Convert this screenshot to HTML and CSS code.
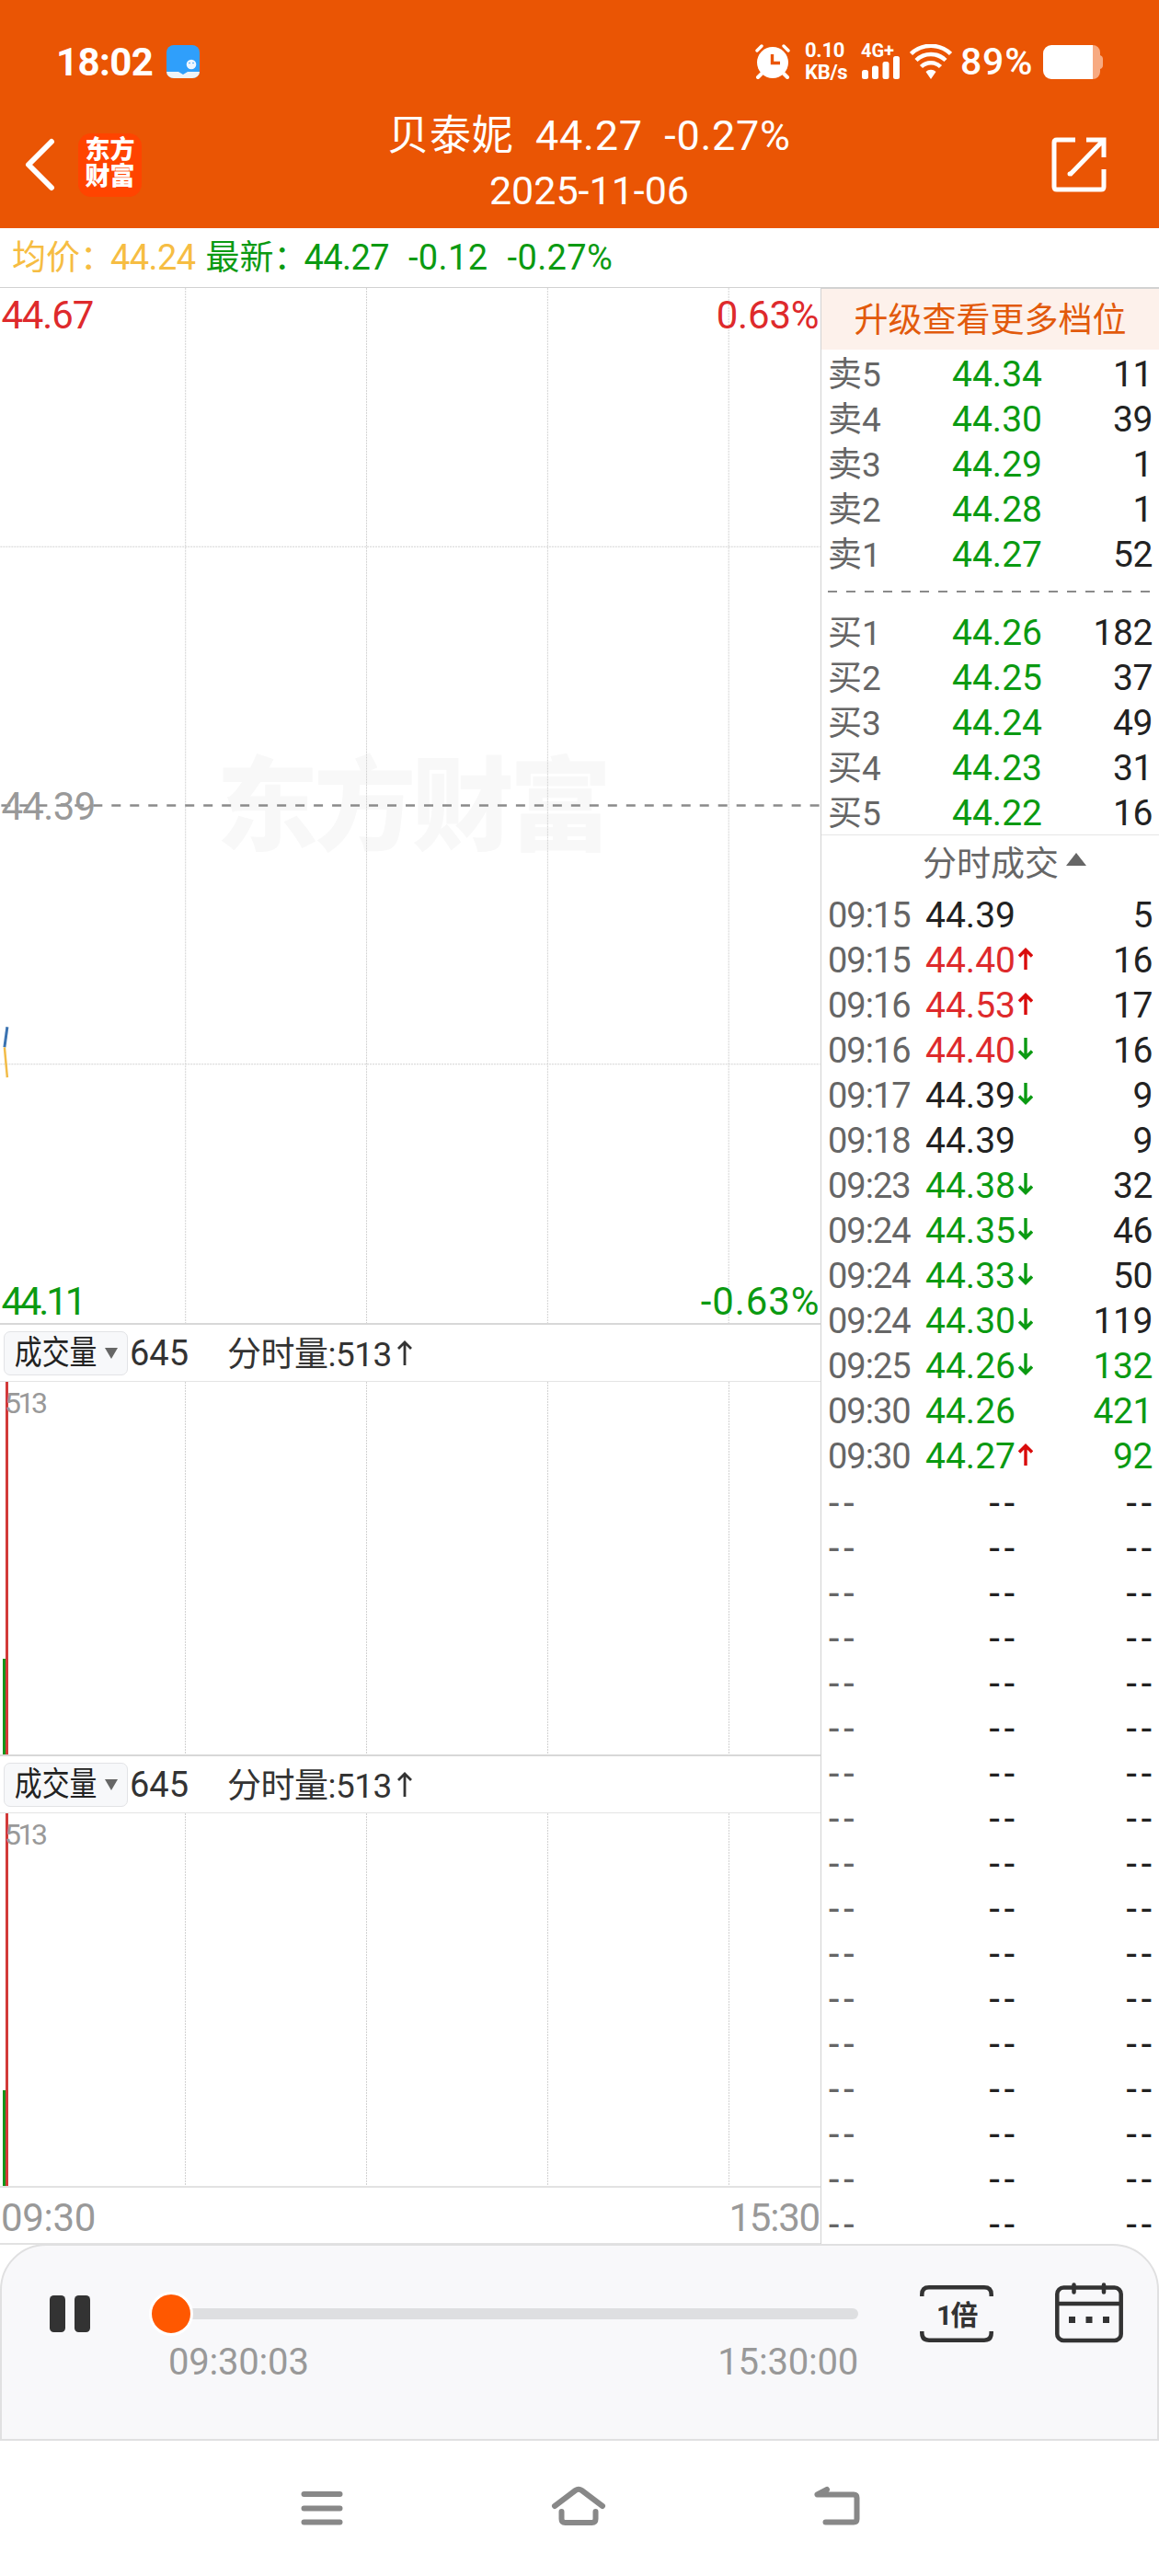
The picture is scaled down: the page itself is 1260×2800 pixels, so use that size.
FILE: index.html
```html
<!DOCTYPE html>
<html lang="zh-CN">
<head>
    <meta charset="UTF-8">
    <meta name="viewport" content="width=device-width, initial-scale=1.0">
    <title>贝泰妮 分时回放</title>
    <link rel="stylesheet" href="styles.css">
</head>
<body>
    <div class="header">
        <div class="status-bar">
            <span class="clock">18:02</span>
            <svg class="app-icon" width="36" height="36" viewBox="0 0 36 36">
                <rect width="36" height="36" rx="8" fill="#2f9ffb"/>
                <path d="M0 29h13l5 3 5-3h13a8 7 0 0 1-8 7H8a8 7 0 0 1-8-7z" fill="#eef3f8"/>
                <circle cx="27" cy="21" r="5.3" fill="#eef6ff"/>
                <circle cx="25" cy="19.5" r=".8" fill="#2f9ffb"/>
                <circle cx="29" cy="19.5" r=".8" fill="#2f9ffb"/>
            </svg>
            <svg class="alarm" width="38" height="38" viewBox="0 0 38 38" fill="none" stroke="#fff" stroke-linecap="round">
                <circle cx="19" cy="20" r="17" fill="#fff" stroke="none"/>
                <path d="M2 7l5-5M36 7l-5-5" stroke-width="3.4"/>
                <path d="M7 32l-4 4M31 32l4 4" stroke-width="4"/>
                <path d="M18.500 11v9.500h8.500" stroke="#ea5504" stroke-width="3.400" stroke-linecap="butt"/>
            </svg>
            <div class="net-speed"><span>0.10</span><span>KB/s</span></div>
            <div class="signal">
                <span>4G+</span>
                <svg width="42" height="25" viewBox="0 0 42 25" fill="#fff">
                    <rect x="1" y="15" width="7" height="10" rx="2.500"/>
                    <rect x="12" y="10.500" width="7" height="14.500" rx="2.500"/>
                    <rect x="23.500" y="6" width="7" height="19" rx="2.500"/>
                    <rect x="35" y="0" width="7" height="25" rx="2.500"/>
                </svg>
            </div>
            <svg class="wifi" width="46" height="38" viewBox="0 0 46 38" fill="none" stroke="#fff" stroke-width="4.500">
                <path d="M1.500 10.500a31 31 0 0 1 43 0"/>
                <path d="M7 17.500a23 23 0 0 1 32 0"/>
                <path d="M12.500 24.500a15 15 0 0 1 21 0"/>
                <path d="M17.500 30a8 8 0 0 1 11 0l-5.500 8z" fill="#fff" stroke="none"/>
            </svg>
            <span class="battery-text">89%</span>
            <svg class="battery" width="65" height="37" viewBox="0 0 65 37">
                <path d="M54 0a8 8 0 0 1 8 8v3q3 1 3 4v7q0 3-3 4v3a8 8 0 0 1-8 8z" fill="#f7aa81"/>
                <path d="M9 0h45v37H9a9 9 0 0 1-9-9V9a9 9 0 0 1 9-9z" fill="#fff"/>
            </svg>
        </div>
        <div class="title-bar">
            <div class="title-left">
                <svg width="36" height="58" viewBox="0 0 36 58" fill="none" stroke="#fff" stroke-width="6" stroke-linecap="round" stroke-linejoin="round">
                    <path d="M31 4L6 29l25 25"/>
                </svg>
                <div class="logo">东方<br>财富</div>
            </div>
            <div class="title-text">
                <div class="stock-name">贝泰妮&nbsp; 44.27&nbsp; -0.27%</div>
                <div class="stock-date">2025-11-06</div>
            </div>
            <svg class="share" width="60" height="60" viewBox="0 0 60 60" fill="none" stroke="#fff" stroke-width="5">
                <path d="M26 3H6q-3 0-3 3v48q0 3 3 3h48q3 0 3-3V35"/>
                <path d="M38 3h19v19M57 3L20 41"/>
                <circle cx="20" cy="40" r="2.500" fill="#fff" stroke="none"/>
            </svg>
        </div>
    </div>

    <div class="quote">
        <span class="avg">均价：</span><span class="avg quote-num">44.24</span>
        <span class="green last">最新：</span><span class="green quote-num">44.27</span>
        <span class="green change">-0.12</span>
        <span class="green change">-0.27%</span>
    </div>

    <div class="main">
        <div class="charts">
            <!-- 分时图 -->
            <svg class="price-chart" width="892" height="1126" viewBox="0 0 892 1126">
                <text x="235" y="604" class="watermark" textLength="430">东方财富</text>
                <g class="grid">
                    <path d="M201.500 0V1126M398.500 0V1126M595.500 0V1126M792.500 0V1126M0 281.500H892M0 844.500H892"/>
                </g>
                <path class="base-line" d="M1 563H892"/>
                <path d="M7.500 804L4.500 826" stroke="#3b73b1" stroke-width="3"/>
                <path d="M4.500 826L7.500 859" stroke="#f2bc48" stroke-width="2.500"/>
                <text x="1" y="44.500" class="label red" textLength="101">44.67</text>
                <text x="779" y="44.500" class="label red" textLength="112">0.63%</text>
                <text x="1" y="579" class="label gray" textLength="103">44.39</text>
                <text x="1" y="1117" class="label green" textLength="93">44.11</text>
                <text x="762" y="1117" class="label green" textLength="129">-0.63%</text>
            </svg>

            <div class="vol-head">
                <div class="picker"><span>成交量</span><i></i></div>
                <span class="vol-total">645</span>
                <span class="vol-now">分时量:513</span>
                <svg width="16" height="28" viewBox="0 0 16 28" fill="none" stroke="#333" stroke-width="2.800"><path d="M8 27V2M1 9l7-7 7 7"/></svg>
            </div>
            <svg class="vol-chart" width="892" height="405" viewBox="0 0 892 405">
                <g class="grid"><path d="M201.500 0V405M398.500 0V405M595.500 0V405M792.500 0V405"/></g>
                <rect x="3" y="301" width="3" height="104" fill="#14951a"/>
                <rect x="6" y="0" width="3" height="405" fill="#d23a39"/>
                <text x="5" y="34" class="label small gray" textLength="47">513</text>
            </svg>

            <div class="vol-head">
                <div class="picker"><span>成交量</span><i></i></div>
                <span class="vol-total">645</span>
                <span class="vol-now">分时量:513</span>
                <svg width="16" height="28" viewBox="0 0 16 28" fill="none" stroke="#333" stroke-width="2.800"><path d="M8 27V2M1 9l7-7 7 7"/></svg>
            </div>
            <svg class="vol-chart" width="892" height="405" viewBox="0 0 892 405">
                <g class="grid"><path d="M201.500 0V405M398.500 0V405M595.500 0V405M792.500 0V405"/></g>
                <rect x="3" y="301" width="3" height="104" fill="#14951a"/>
                <rect x="6" y="0" width="3" height="405" fill="#d23a39"/>
                <text x="5" y="34" class="label small gray" textLength="47">513</text>
            </svg>
            <div class="time-axis"><span>09:30</span><span class="axis-end">15:30</span></div>
        </div>

        <div class="side">
            <div class="upgrade">升级查看更多档位</div>
            <div class="book" id="sellList"></div>
            <svg class="book-line" width="367" height="38" viewBox="0 0 367 38"><path d="M7 15H360" stroke="#8a8a8a" stroke-width="2" stroke-dasharray="10 10"/></svg>
            <div class="book" id="buyList"></div>
            <div class="deal-head">分时成交<i></i></div>
            <div id="dealList"></div>
        </div>
    </div>

    <div class="player">
        <svg class="pause" width="44" height="40" viewBox="0 0 44 40" fill="#333">
            <rect width="17" height="40" rx="4.500"/>
            <rect x="27" width="17" height="40" rx="4.500"/>
        </svg>
        <div class="progress">
            <div class="track"><div class="knob"></div></div>
            <div class="progress-time"><span>09:30:03</span><span>15:30:00</span></div>
        </div>
        <div class="speed">
            <svg width="80" height="62" viewBox="0 0 80 62" fill="none" stroke="#333" stroke-width="4.500">
                <path d="M2.300 12V10q0-7.700 7.700-7.700h60q7.700 0 7.700 7.700v2M2.300 50v2q0 7.700 7.700 7.700h60q7.700 0 7.700-7.700v-2"/>
            </svg>
            <span>1倍</span>
        </div>
        <svg class="calendar" width="74" height="66" viewBox="0 0 74 66" fill="none" stroke="#333" stroke-width="4.500">
            <rect x="2.300" y="5.500" width="69.400" height="57.500" rx="7"/>
            <path d="M2 23h70"/>
            <path d="M20.500 2.500v8M53 2.500v8" stroke-linecap="round"/>
            <path d="M15 40.500h7M33.500 40.500h7M52 40.500h7" stroke-width="7"/>
        </svg>
    </div>

    <div class="nav">
        <svg width="46" height="46" viewBox="0 0 46 46" stroke="#888" stroke-width="6" stroke-linecap="round"><path d="M3.500 9h39M3.500 24.500h39M3.500 39.500h39"/></svg>
        <svg width="60" height="46" viewBox="0 0 60 46" fill="none" stroke="#888" stroke-width="6" stroke-linecap="round" stroke-linejoin="round"><path d="M4 22L26.500 5q3.500-2.500 7 0L56 22M11.500 28v8q0 4 4 4h29q4 0 4-4v-8"/></svg>
        <svg width="50" height="46" viewBox="0 0 50 46" fill="none" stroke="#888" stroke-width="6" stroke-linecap="round" stroke-linejoin="round"><path d="M14 4L3.500 9.500H43q3.500 0 3.500 3.500v23q0 3.500-3.500 3.500H12.500"/></svg>
    </div>

    <script>
        const sells = [['卖5', '44.34', 11], ['卖4', '44.30', 39], ['卖3', '44.29', 1], ['卖2', '44.28', 1], ['卖1', '44.27', 52]];
        const buys = [['买1', '44.26', 182], ['买2', '44.25', 37], ['买3', '44.24', 49], ['买4', '44.23', 31], ['买5', '44.22', 16]];

        // 时间, 价格, 价格颜色, 箭头, 手数, 手数颜色
        const deals = [
            ['09:15', '44.39', '', '', 5, ''],
            ['09:15', '44.40', 'red', 'up', 16, ''],
            ['09:16', '44.53', 'red', 'up', 17, ''],
            ['09:16', '44.40', 'red', 'down', 16, ''],
            ['09:17', '44.39', '', 'down', 9, ''],
            ['09:18', '44.39', '', '', 9, ''],
            ['09:23', '44.38', 'green', 'down', 32, ''],
            ['09:24', '44.35', 'green', 'down', 46, ''],
            ['09:24', '44.33', 'green', 'down', 50, ''],
            ['09:24', '44.30', 'green', 'down', 119, ''],
            ['09:25', '44.26', 'green', 'down', 132, 'green'],
            ['09:30', '44.26', 'green', '', 421, 'green'],
            ['09:30', '44.27', 'green', 'up', 92, 'green']
        ];

        const arrows = {
            up: '<svg width="16" height="24" viewBox="0 0 16 24" fill="none" stroke="#d90b0b" stroke-width="3.400"><path d="M8 24V3M1 9.500l7-7 7 7"/></svg>',
            down: '<svg width="16" height="24" viewBox="0 0 16 24" fill="none" stroke="#0b9a12" stroke-width="3.400"><path d="M8 0v21M1 14.500l7 7 7-7"/></svg>',
            '': ''
        };

        function renderBook(id, rows) {
            document.getElementById(id).innerHTML = rows.map(r =>
                `<div class="row"><span class="name">${r[0]}</span><span class="price green">${r[1]}</span><span class="num">${r[2]}</span></div>`
            ).join('');
        }

        renderBook('sellList', sells);
        renderBook('buyList', buys);

        // 不足30行用 -- 补齐
        while (deals.length < 30) {
            deals.push(['--', '--', 'none', '', '--', 'none']);
        }
        document.getElementById('dealList').innerHTML = deals.map(d =>
            `<div class="row deal"><span class="time ${d[5]}">${d[0]}</span><span class="price ${d[2]}">${d[1]}</span><span class="arrow">${arrows[d[3]]}</span><span class="num ${d[5]}">${d[4]}</span></div>`
        ).join('');
    </script>
</body>
</html>
```
FILE: styles.css
```css
* {
    box-sizing: border-box;
}
body {
    font-family: Roboto, "Noto Sans CJK SC", sans-serif;
    background-color: #fff;
    color: #222;
    margin: 0;
    width: 1260px;
    height: 2800px;
    display: flex;
    flex-direction: column;
}
svg {
    display: block;
    flex: none;
}
.header {
    height: 248px;
    background-color: #ea5504;
    color: #fff;
    flex: none;
}
.status-bar {
    height: 112px;
    padding: 22px 61px 0 61px;
    display: flex;
    align-items: center;
}
.clock {
    font-size: 42px;
    font-weight: 700;
    width: 120px;
    letter-spacing: -0.6px;
}
.alarm {
    margin-left: auto;
    margin-right: 16px;
}
.net-speed {
    width: 61px;
    display: flex;
    flex-direction: column;
    font-size: 22px;
    line-height: 24px;
    font-weight: 700;
    letter-spacing: -0.3px;
}
.signal {
    width: 53px;
    height: 38px;
    font-size: 20px;
    font-weight: 700;
    line-height: 14px;
}
.signal span {
    display: block;
    height: 13px;
}
.battery-text {
    font-size: 41px;
    font-weight: 500;
    width: 99px;
    padding-left: 9px;
    letter-spacing: 0.8px;
}
.title-bar {
    height: 134px;
    padding: 0 57px 0 25px;
    display: flex;
    align-items: center;
}
.title-left {
    width: 177px;
    display: flex;
    align-items: center;
    gap: 24px;
}
.logo {
    width: 69px;
    height: 69px;
    border-radius: 14px;
    background-color: #ff4400;
    font-size: 27px;
    font-weight: 900;
    line-height: 29px;
    text-align: center;
    padding-top: 4px;
}
.title-text {
    flex: 1;
    text-align: center;
    white-space: nowrap;
    margin-top: -6px;
}
.stock-name {
    font-size: 45px;
    line-height: 61px;
    letter-spacing: 0.7px;
}
.stock-date {
    font-size: 43px;
    line-height: 58px;
}
.share {
    margin-left: 64px;
}
.quote {
    height: 64px;
    padding: 0 13px;
    font-size: 37px;
    line-height: 65px;
    display: flex;
    flex: none;
    white-space: nowrap;
}
.quote-num {
    font-size: 38px;
    letter-spacing: -0.6px;
}
.avg {
    color: #f6bd43;
}
.quote .quote-num {
    margin-left: -4px;
}
.last {
    margin-left: 11px;
}
.change {
    font-size: 38px;
    margin-left: 21px;
    letter-spacing: 0.4px;
}
.green {
    color: #0b9a12;
    fill: #0b9a12;
}
.red {
    color: #de2a2c;
    fill: #de2a2c;
}
.gray {
    color: #999;
    fill: #999;
}
.main {
    display: flex;
    height: 2127px;
    flex: none;
}
.charts {
    width: 892px;
    flex: none;
}
.price-chart {
    border-top: 1px solid #d2d2d2;
}
.label {
    font-size: 42px;
}
.small {
    font-size: 32px;
}
.watermark {
    font-family: "Noto Sans CJK SC", sans-serif;
    font-size: 111px;
    font-weight: 900;
    fill: #f8f8f8;
}
.grid path {
    fill: none;
    stroke: #d2d2d2;
    stroke-width: 1;
    stroke-dasharray: 2 1;
}
.base-line {
    stroke: #8a8a8a;
    stroke-width: 2.5;
    stroke-dasharray: 10 10;
}
.vol-head {
    height: 64px;
    border-top: 2px solid #d8d8d8;
    border-bottom: 1px solid #e4e4e4;
    padding-left: 4px;
    display: flex;
    align-items: center;
    color: #333;
}
.picker {
    width: 135px;
    height: 48px;
    border: 1px solid #e2e3e6;
    border-radius: 7px;
    background-color: #f7f8fa;
    display: flex;
    align-items: center;
    color: #222;
}
.picker span {
    font-size: 36px;
    line-height: 44px;
    width: 98px;
    padding-left: 13px;
    white-space: nowrap;
    transform: scaleX(0.83);
    transform-origin: left;
}
.picker i {
    margin-left: 11px;
    border: 7.5px solid transparent;
    border-top: 12px solid #666;
    border-bottom: 0;
}
.vol-total {
    font-size: 38px;
    width: 108px;
    padding-left: 2px;
}
.vol-now {
    font-size: 37px;
    width: 185px;
    margin-top: -3px;
    letter-spacing: -0.5px;
    white-space: nowrap;
}
.time-axis {
    height: 64px;
    border-top: 2px solid #e2e2e2;
    border-bottom: 2px solid #e2e2e2;
    display: flex;
    justify-content: space-between;
    padding: 0 1px 0 1px;
    font-size: 42px;
    line-height: 65px;
    letter-spacing: -0.3px;
    color: #999;
}
.axis-end {
    letter-spacing: -1.2px;
}
.side {
    width: 368px;
    border-left: 1px solid #d2d2d2;
}
.upgrade {
    height: 68px;
    border-top: 2px solid #d2d2d2;
    background-color: #fdf1eb;
    color: #e25a0c;
    font-size: 37px;
    line-height: 69px;
    text-align: center;
    white-space: nowrap;
}
.book {
    padding-top: 3px;
}
.row {
    height: 49px;
    padding: 0 7px 0 7px;
    display: flex;
    align-items: center;
    font-size: 39px;
    line-height: 49px;
}
.name {
    width: 100px;
    font-size: 37px;
    color: #666;
}
.row .price {
    width: 133px;
    text-align: right;
    letter-spacing: 0;
}
.num {
    flex: 1;
    text-align: right;
    letter-spacing: -0.4px;
}
.book-line {
    margin-bottom: -5px;
}
.deal-head {
    height: 64px;
    margin-top: -2px;
    border-top: 1px solid #e6e6e6;
    font-size: 37px;
    line-height: 64px;
    color: #666;
    display: flex;
    padding-left: 110px;
}
.deal-head i {
    width: 22px;
    height: 14px;
    margin-left: 8px;
    margin-top: 19px;
    background-color: #666;
    clip-path: polygon(50% 0, 100% 100%, 0 100%);
}
.time {
    width: 93px;
    font-size: 38px;
    color: #666;
    letter-spacing: -1px;
}
.time.green {
    color: #666;
}
.deal .price {
    width: 111px;
}
.deal .none {
    font-family: "Noto Sans", sans-serif;
    font-size: 41px;
    line-height: 46px;
    letter-spacing: 3px;
    margin-top: -3px;
}
.deal .price.none,
.deal .num.none {
    position: relative;
    left: 3px;
}
.arrow {
    width: 20px;
    padding-left: 3px;
    margin-top: -5px;
}
.player {
    height: 214px;
    flex: none;
    border: 2px solid #e0e0e1;
    border-radius: 50px 50px 0 0;
    background-color: #f8f8fa;
    display: flex;
    align-items: flex-start;
    padding: 0 36px 0 52px;
}
.pause {
    margin-top: 54px;
}
.progress {
    width: 747px;
    margin: 68px 0 0 88px;
}
.track {
    height: 12px;
    border-radius: 6px;
    background-color: #dedfe1;
    position: relative;
}
.knob {
    position: absolute;
    left: -24px;
    top: -18px;
    width: 48px;
    height: 48px;
    border-radius: 50%;
    border: 3px solid #fff;
    background-color: #ff5800;
}
.progress-time {
    display: flex;
    justify-content: space-between;
    margin: 21px 0 0 -3px;
    font-size: 40px;
    line-height: 52px;
    letter-spacing: -0.2px;
    color: #999;
}
.speed {
    position: relative;
    margin: 43px 0 0 67px;
}
.speed span {
    position: absolute;
    left: 0;
    top: 2px;
    width: 80px;
    line-height: 62px;
    text-align: center;
    font-size: 30px;
    font-weight: 700;
    letter-spacing: -1.5px;
    color: #333;
}
.calendar {
    margin: 40px 0 0 67px;
}
.nav {
    flex: 1;
    padding: 49px 325px 0 327px;
    display: flex;
    justify-content: space-between;
    align-items: flex-start;
}
```
